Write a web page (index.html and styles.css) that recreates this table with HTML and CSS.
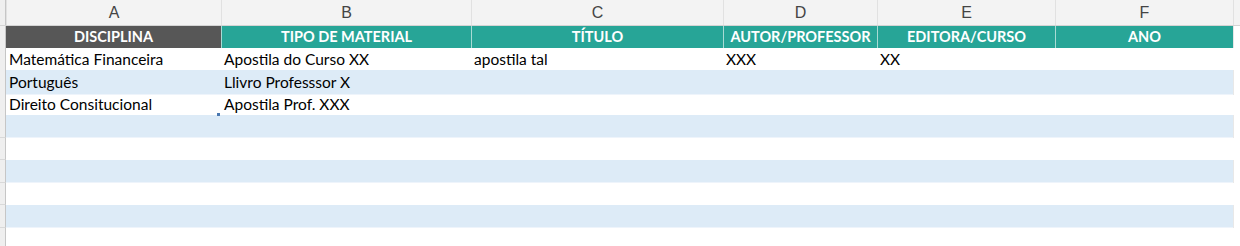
FILE: index.html
```html
<!DOCTYPE html>
<html lang="pt">
<head>
<meta charset="utf-8">
<title>Planilha</title>
<link rel="stylesheet" href="styles.css">
</head>
<body>
<div class="sheet">
  <div class="row letters">
    <div class="gut"></div>
    <div class="cell">A</div>
    <div class="cell">B</div>
    <div class="cell">C</div>
    <div class="cell">D</div>
    <div class="cell">E</div>
    <div class="cell">F</div>
    <div class="tail"></div>
  </div>
  <div class="row head">
    <div class="gut"></div>
    <div class="cell dark">DISCIPLINA</div>
    <div class="cell teal">TIPO DE MATERIAL</div>
    <div class="cell teal">TÍTULO</div>
    <div class="cell teal">AUTOR/PROFESSOR</div>
    <div class="cell teal">EDITORA/CURSO</div>
    <div class="cell teal">ANO</div>
    <div class="tail"></div>
  </div>
  <div class="row data r22">
    <div class="gut"></div>
    <div class="cell">Matemática Financeira</div>
    <div class="cell">Apostila do Curso XX</div>
    <div class="cell">apostila tal</div>
    <div class="cell">XXX</div>
    <div class="cell">XX</div>
    <div class="cell"></div>
    <div class="tail"></div>
  </div>
  <div class="row data band r23">
    <div class="gut"></div>
    <div class="cell">Português</div>
    <div class="cell">Llivro Professsor X</div>
    <div class="cell"></div>
    <div class="cell"></div>
    <div class="cell"></div>
    <div class="cell"></div>
    <div class="tail"></div>
  </div>
  <div class="row data r22">
    <div class="gut"></div>
    <div class="cell marked">Direito Consitucional<span class="handle"></span></div>
    <div class="cell">Apostila Prof. XXX</div>
    <div class="cell"></div>
    <div class="cell"></div>
    <div class="cell"></div>
    <div class="cell"></div>
    <div class="tail"></div>
  </div>
  <div class="row data band r23">
    <div class="gut"></div>
    <div class="cell"></div><div class="cell"></div><div class="cell"></div>
    <div class="cell"></div><div class="cell"></div><div class="cell"></div>
    <div class="tail"></div>
  </div>
  <div class="row data r22">
    <div class="gut"></div>
    <div class="cell"></div><div class="cell"></div><div class="cell"></div>
    <div class="cell"></div><div class="cell"></div><div class="cell"></div>
    <div class="tail"></div>
  </div>
  <div class="row data band r23">
    <div class="gut"></div>
    <div class="cell"></div><div class="cell"></div><div class="cell"></div>
    <div class="cell"></div><div class="cell"></div><div class="cell"></div>
    <div class="tail"></div>
  </div>
  <div class="row data r22">
    <div class="gut"></div>
    <div class="cell"></div><div class="cell"></div><div class="cell"></div>
    <div class="cell"></div><div class="cell"></div><div class="cell"></div>
    <div class="tail"></div>
  </div>
  <div class="row data band r23">
    <div class="gut"></div>
    <div class="cell"></div><div class="cell"></div><div class="cell"></div>
    <div class="cell"></div><div class="cell"></div><div class="cell"></div>
    <div class="tail"></div>
  </div>
  <div class="row data r22">
    <div class="gut"></div>
    <div class="cell"></div><div class="cell"></div><div class="cell"></div>
    <div class="cell"></div><div class="cell"></div><div class="cell"></div>
    <div class="tail"></div>
  </div>
</div>
</body>
</html>
```

FILE: styles.css
```css
* { box-sizing: border-box; }
html, body { margin: 0; padding: 0; background: #ffffff; }
body { width: 1240px; height: 246px; overflow: hidden; }

.sheet { display: flex; flex-direction: column; }

.row {
  display: grid;
  grid-template-columns: 6px 215px 250px 252px 154px 178px 178px 7px;
}

.gut {
  background: #efefef;
  border-right: 1px solid #c6c6c6;
}

/* column letters */
.letters { height: 26px; background: #f3f3f3; border-bottom: 1px solid #d4d4d4; }
.letters .cell {
  font-family: "Liberation Sans", Arial, sans-serif;
  font-size: 16px;
  color: #444444;
  text-align: center;
  padding-top: 3px;
  line-height: 20px;
  border-left: 1px solid #e1e1e1;
}
.letters .cell:first-of-type { border-left: none; }
.letters .tail { border-left: 1px solid #e1e1e1; }

/* header band */
.head { height: 22px; }
.head .cell {
  font-family: Lato, "Open Sans", sans-serif;
  font-weight: 700;
  font-size: 14.5px;
  color: #ffffff;
  text-align: center;
  line-height: 22px;
  white-space: nowrap;
  overflow: hidden;
}
.head .dark { background: #575757; }
.head .teal { background: #27a597; border-left: 1px solid #a9dbd4; }
.head .tail { background: #ffffff; border-left: 1px solid #e6e6e6; }

/* data rows */
.data .cell {
  font-family: Lato, "Open Sans", sans-serif;
  font-size: 15.5px;
  color: #000000;
  padding-left: 3px;
  white-space: nowrap;
  overflow: visible;
}
.r22 { height: 22px; }
.r23 { height: 23px; }
.r22 .cell { line-height: 23px; }
.r23 .cell { line-height: 24px; }
.data .gut { border-bottom: 1px solid #d9d9d9; }
.band .cell { background: #ddebf7; border-bottom: 1px solid #eef4fb; }
.band .tail { border-left: 1px solid #e8e8e8; }

.marked { position: relative; }
.handle {
  position: absolute;
  right: 1px;
  bottom: 0;
  width: 3px;
  height: 3px;
  background: #4a78b0;
}
```
